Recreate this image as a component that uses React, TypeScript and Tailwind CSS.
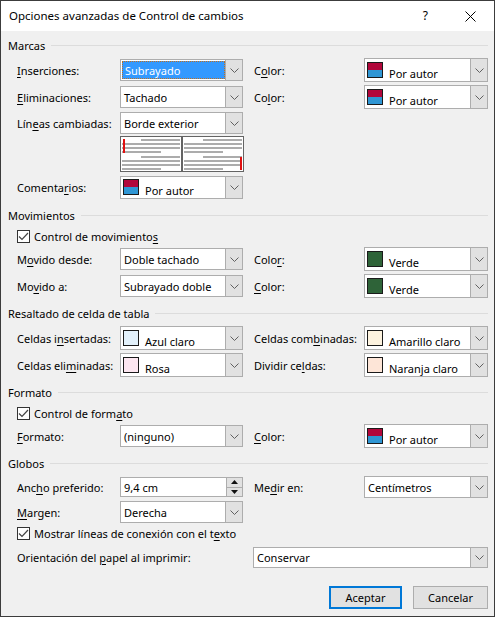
import React from 'react';

type Swatch = { top: string; bottom?: string } | null;

const FONT = "font-['Noto_Sans',sans-serif]";

function L({ t, u }: { t: string; u: number }) {
  // label with underlined access key
  if (u < 0) return <>{t}</>;
  return (
    <>
      {t.slice(0, u)}
      <span className="underline underline-offset-[2px]">{t[u]}</span>
      {t.slice(u + 1)}
    </>
  );
}

function Chevron() {
  return (
    <svg width="9" height="5" viewBox="0 0 9 5" className="block">
      <polyline points="0.5,0.5 4.5,4.5 8.5,0.5" fill="none" stroke="#606060" strokeWidth="1" />
    </svg>
  );
}

function Combo({
  w,
  h,
  text,
  swatch = null,
  selected = false,
}: {
  w: string;
  h: string;
  text: string;
  swatch?: Swatch;
  selected?: boolean;
}) {
  return (
    <div className={`${w} ${h} flex border border-[#adadad] bg-white`}>
      <div className="flex min-w-0 flex-1 items-center">
        {swatch ? (
          <>
            <div className="ml-[2px] flex h-[16px] w-[16px] flex-col border border-[#1a1a1a]">
              <div className="flex-1" style={{ background: swatch.top }} />
              {swatch.bottom && <div className="flex-1" style={{ background: swatch.bottom }} />}
            </div>
            <span className="ml-[6px] mt-[7px] whitespace-nowrap">{text}</span>
          </>
        ) : selected ? (
          <span className="ml-[1px] flex h-[18px] flex-1 items-center border border-dotted border-[#c07020] bg-[#3399ff] pl-[2px] text-white">
            {text}
          </span>
        ) : (
          <span className="ml-[3px] whitespace-nowrap">{text}</span>
        )}
      </div>
      <div className="flex w-[17px] items-center justify-center border-l border-[#adadad] bg-[#e1e1e1]">
        <Chevron />
      </div>
    </div>
  );
}

function Header({ title }: { title: string }) {
  return (
    <div className="flex h-[14px] items-center gap-[6px]">
      <span className="whitespace-nowrap">{title}</span>
      <div className="h-px flex-1 bg-[#dcdcdc]" />
    </div>
  );
}

function Check({ children, mt }: { children: React.ReactNode; mt: string }) {
  return (
    <div className={`${mt} flex h-[16px] items-center pl-[9px]`}>
      <div className="flex h-[13px] w-[13px] items-center justify-center border border-[#333333] bg-white">
        <svg width="11" height="9" viewBox="0 0 11 9">
          <polyline points="1,4.5 4,7.5 10,1" fill="none" stroke="#444" strokeWidth="1.2" />
        </svg>
      </div>
      <span className="ml-[4px] whitespace-nowrap">{children}</span>
    </div>
  );
}

const RED_BLUE: Swatch = { top: '#b1073b', bottom: '#2f96d4' };
const GREEN: Swatch = { top: '#2e6338' };

function Row({
  mt,
  l1,
  c1,
  l2,
  c2,
}: {
  mt: string;
  l1: React.ReactNode;
  c1: React.ReactNode;
  l2?: React.ReactNode;
  c2?: React.ReactNode;
}) {
  return (
    <div className={`${mt} flex h-[24px] items-center pl-[9px]`}>
      <div className="w-[103px] whitespace-nowrap">{l1}</div>
      <div className="flex w-[123px] items-center">{c1}</div>
      {l2 && <div className="ml-[11px] w-[110px] whitespace-nowrap">{l2}</div>}
      {c2 && <div className="flex w-[124px] items-center">{c2}</div>}
    </div>
  );
}

function Preview() {
  const grey = '#acacac';
  const panel = (x0: number, x1: number, red: 'top' | 'bottom') => {
    const mid = x0 + 19;
    const short = x0 + 39;
    const ys = [3, 7, 11, 15, 20, 24, 28, 32];
    const starts = [mid, x0, x0, x0, mid, x0, x0, x0];
    const ends = [x1, x1, x1, short, x1, x1, x1, short];
    return (
      <g>
        {ys.map((y, i) => (
          <rect key={i} x={starts[i]} y={y} width={ends[i] - starts[i]} height={2} fill={grey} />
        ))}
        {red === 'top' ? (
          <rect x={x0 + 1} y={3} width={2} height={14} fill="#e01010" />
        ) : (
          <rect x={x1 - 2} y={21} width={2} height={13} fill="#e01010" />
        )}
      </g>
    );
  };
  return (
    <svg width="124" height="36" viewBox="0 0 124 36" className="block">
      <rect x="0.5" y="0.5" width="123" height="35" fill="#fff" stroke="#646464" />
      <rect x="61" y="0" width="2" height="36" fill="#646464" />
      {panel(2, 60, 'top')}
      {panel(64, 122, 'bottom')}
    </svg>
  );
}

function Spinner() {
  return (
    <div className="flex h-[20px] w-[123px] border border-[#adadad] bg-white">
      <span className="ml-[3px] flex flex-1 items-center">9,4 cm</span>
      <div className="flex w-[16px] flex-col border-l border-[#adadad] bg-[#e1e1e1]">
        <div className="flex flex-1 items-center justify-center border-b border-[#adadad]">
          <svg width="7" height="4" viewBox="0 0 7 4">
            <polygon points="0,4 3.5,0 7,4" fill="#111" />
          </svg>
        </div>
        <div className="flex flex-1 items-center justify-center">
          <svg width="7" height="4" viewBox="0 0 7 4">
            <polygon points="0,0 3.5,4 7,0" fill="#111" />
          </svg>
        </div>
      </div>
    </div>
  );
}

export default function App() {
  return (
    <div className={`${FONT} flex h-[617px] w-[495px] flex-col border border-[#3c3c3c] text-[11px] leading-none text-black`}>
      {/* title bar */}
      <div className="flex h-[30px] items-center bg-white pl-[8px]">
        <span className="flex-1 text-[11.5px]">Opciones avanzadas de Control de cambios</span>
        <span className="mr-[37px] text-[12px]">?</span>
        <svg width="11" height="11" viewBox="0 0 11 11" className="mr-[18px]">
          <line x1="0.5" y1="0.5" x2="10.5" y2="10.5" stroke="#000" strokeWidth="1" />
          <line x1="10.5" y1="0.5" x2="0.5" y2="10.5" stroke="#000" strokeWidth="1" />
        </svg>
      </div>

      <div className="flex flex-1 flex-col bg-[#f0f0f0] pl-[7px] pr-[6px]">
        <div className="mt-[7px]">
          <Header title="Marcas" />
        </div>
        <Row
          mt="mt-[6px]"
          l1={<L t="Inserciones:" u={0} />}
          c1={<Combo w="w-[123px]" h="h-[22px]" text="Subrayado" selected />}
          l2={<L t="Color:" u={1} />}
          c2={<Combo w="w-[124px]" h="h-[24px]" text="Por autor" swatch={RED_BLUE} />}
        />
        <Row
          mt="mt-[3px]"
          l1={<L t="Eliminaciones:" u={0} />}
          c1={<Combo w="w-[123px]" h="h-[22px]" text="Tachado" />}
          l2={<L t="Color:" u={2} />}
          c2={<Combo w="w-[124px]" h="h-[24px]" text="Por autor" swatch={RED_BLUE} />}
        />
        <Row
          mt="mt-[2px]"
          l1={<L t="Líneas cambiadas:" u={3} />}
          c1={<Combo w="w-[123px]" h="h-[22px]" text="Borde exterior" />}
        />
        <div className="mt-[1px] flex pl-[112px]">
          <Preview />
        </div>
        <Row
          mt="mt-[3px]"
          l1={<L t="Comentarios:" u={7} />}
          c1={<Combo w="w-[123px]" h="h-[23px]" text="Por autor" swatch={RED_BLUE} />}
        />

        <div className="mt-[9px]">
          <Header title="Movimientos" />
        </div>
        <Check mt="mt-[6px]">
          <L t="Control de movimientos" u={21} />
        </Check>
        <Row
          mt="mt-[3px]"
          l1={<L t="Movido desde:" u={1} />}
          c1={<Combo w="w-[123px]" h="h-[22px]" text="Doble tachado" />}
          l2={<L t="Color:" u={4} />}
          c2={<Combo w="w-[124px]" h="h-[24px]" text="Verde" swatch={GREEN} />}
        />
        <Row
          mt="mt-[3px]"
          l1={<L t="Movido a:" u={2} />}
          c1={<Combo w="w-[123px]" h="h-[22px]" text="Subrayado doble" />}
          l2={<L t="Color:" u={0} />}
          c2={<Combo w="w-[124px]" h="h-[24px]" text="Verde" swatch={GREEN} />}
        />

        <div className="mt-[8px]">
          <Header title="Resaltado de celda de tabla" />
        </div>
        <Row
          mt="mt-[6px]"
          l1={<L t="Celdas insertadas:" u={8} />}
          c1={<Combo w="w-[123px]" h="h-[24px]" text="Azul claro" swatch={{ top: '#e2f0fa' }} />}
          l2={<L t="Celdas combinadas:" u={10} />}
          c2={<Combo w="w-[124px]" h="h-[24px]" text="Amarillo claro" swatch={{ top: '#fdf3df' }} />}
        />
        <Row
          mt="mt-[3px]"
          l1={<L t="Celdas eliminadas:" u={10} />}
          c1={<Combo w="w-[123px]" h="h-[24px]" text="Rosa" swatch={{ top: '#fce6f0' }} />}
          l2={<L t="Dividir celdas:" u={10} />}
          c2={<Combo w="w-[124px]" h="h-[24px]" text="Naranja claro" swatch={{ top: '#fde5d7' }} />}
        />

        <div className="mt-[8px]">
          <Header title="Formato" />
        </div>
        <Check mt="mt-[6px]">
          <L t="Control de formato" u={15} />
        </Check>
        <Row
          mt="mt-[3px]"
          l1={<L t="Formato:" u={0} />}
          c1={<Combo w="w-[123px]" h="h-[22px]" text="(ninguno)" />}
          l2={<L t="Color:" u={0} />}
          c2={<Combo w="w-[124px]" h="h-[24px]" text="Por autor" swatch={RED_BLUE} />}
        />

        <div className="mt-[8px]">
          <Header title="Globos" />
        </div>
        <Row
          mt="mt-[5px]"
          l1={<L t="Ancho preferido:" u={3} />}
          c1={<Spinner />}
          l2={<L t="Medir en:" u={2} />}
          c2={<Combo w="w-[124px]" h="h-[22px]" text="Centímetros" />}
        />
        <Row
          mt="mt-[1px]"
          l1={<L t="Margen:" u={0} />}
          c1={<Combo w="w-[123px]" h="h-[22px]" text="Derecha" />}
        />
        <Check mt="mt-[1px]">
          <L t="Mostrar líneas de conexión con el texto" u={35} />
        </Check>
        <div className="mt-[4px] flex h-[24px] items-center pl-[9px]">
          <div className="w-[236px] whitespace-nowrap">
            <L t="Orientación del papel al imprimir:" u={16} />
          </div>
          <Combo w="w-[235px]" h="h-[21px]" text="Conservar" />
        </div>

        <div className="mt-[17px] flex justify-end gap-[11px]">
          <button className="flex h-[23px] w-[73px] items-center justify-center border-2 border-[#0078d7] bg-[#e1e1e1]">
            Aceptar
          </button>
          <button className="flex h-[23px] w-[75px] items-center justify-center border border-[#adadad] bg-[#e1e1e1]">
            Cancelar
          </button>
        </div>
      </div>
    </div>
  );
}
